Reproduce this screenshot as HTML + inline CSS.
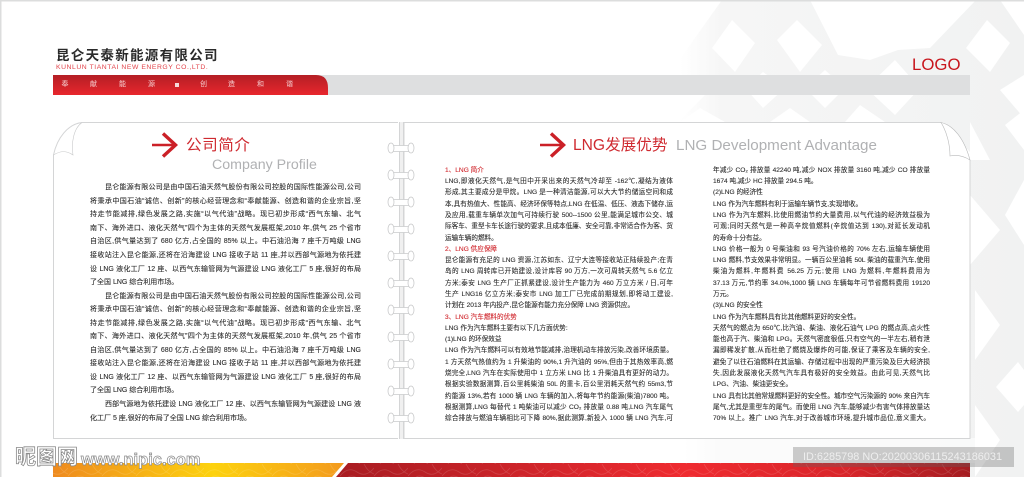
<!DOCTYPE html>
<html lang="zh"><head><meta charset="utf-8"><title>昆仑天泰新能源有限公司</title>
<style>
html,body{margin:0;padding:0;background:#fff}
body{width:1024px;height:477px;overflow:hidden;position:relative;font-family:"Liberation Sans","Noto Sans CJK SC",sans-serif}
svg.bg{position:absolute;left:0;top:0}
.l{position:absolute;font-size:7px;line-height:10px;height:10px;color:#303030;-webkit-text-stroke:.12px #303030;text-align:justify;text-align-last:justify;overflow:hidden}
.e{text-align-last:left}
.r{color:#d0282e;-webkit-text-stroke:.12px #d0282e}
.a .l{left:90px;width:271px}
.a .i{left:105px;width:256px}
.b .l{left:445px;width:228px;font-size:6.6px}
.c .l{left:713px;width:217px;font-size:6.6px}
.t{position:absolute;white-space:nowrap}
</style></head><body>
<svg class="bg" width="1024" height="477" viewBox="0 0 1024 477">
<defs>
<linearGradient id="fade" x1="0" x2="1"><stop offset="0" stop-color="#f6f6f6" stop-opacity="0"/><stop offset=".12" stop-color="#f6f6f6"/><stop offset="1" stop-color="#f1f2f2"/></linearGradient>
<linearGradient id="org" x1="0" x2="1"><stop offset="0" stop-color="#ee8a1f"/><stop offset=".55" stop-color="#fdd20e"/><stop offset="1" stop-color="#f39a1e"/></linearGradient>
<linearGradient id="rd" x1="0" x2="1"><stop offset="0" stop-color="#a81c22"/><stop offset=".55" stop-color="#ef2b30"/><stop offset=".8" stop-color="#d9252a"/><stop offset="1" stop-color="#a41d21"/></linearGradient>
<linearGradient id="bar" x1="0" y1="0" x2="0" y2="1"><stop offset="0" stop-color="#b41f25"/><stop offset="1" stop-color="#e8262d"/></linearGradient>
<pattern id="fl" width="34" height="16" patternUnits="userSpaceOnUse"><path d="M0 12Q8 2 17 8T34 4M6 16Q10 8 20 16M24 0Q28 8 34 10" fill="none" stroke="#fff" stroke-opacity=".14" stroke-width=".8"/></pattern>
</defs>
<!-- lattice -->
<rect x="680" y="0" width="344" height="477" fill="url(#fade)"/>
<g fill="#fff">
<polygon points="680,0 722,0 690,45 680,60"/>
<polygon points="732,20 755,43 735,72 712,48"/>
<polygon points="797,20 822,45 800,72 777,40"/>
<polygon points="810,0 976,0 930,48 898,50 870,60 838,55"/>
<polygon points="680,72 705,95 680,120"/>
<polygon points="763,72 785,88 763,108 745,88"/>
<polygon points="825,70 845,88 825,108 805,88"/>
<polygon points="895,60 920,88 895,115 866,88"/>
<polygon points="987,20 1010,43 990,72 966,48"/>
<polygon points="1024,0 1024,35 1000,0"/>
<polygon points="1024,75 1000,90 1024,118"/>
<polygon points="700,108 725,122 680,122"/>
<polygon points="790,108 810,122 770,122"/>
<polygon points="860,105 885,122 845,122"/>
<polygon points="970,122 990,160 970,160"/>
<polygon points="1005,125 1024,110 1024,150"/>
<polygon points="970,195 1000,230 970,265"/>
<polygon points="1024,180 1005,215 1024,245"/>
<polygon points="975,290 1000,325 975,360"/>
<polygon points="1018,362 996,387 1018,412 1024,405 1024,370"/>
<polygon points="975,405 1000,440 975,477"/>
<rect x="680" y="438" width="300" height="25" fill="#fff" opacity=".55"/>
</g>
<rect x="0" y="0" width="1024" height="1.5" fill="#dcdddd"/>
<rect x="0" y="0" width="1.5" height="477" fill="#dcdddd"/>
<!-- header bar -->
<rect x="53" y="75" width="917" height="20" fill="#dcddde" fill-opacity=".95"/>
<path d="M53 75H316Q328 75 328 88V95H53Z" fill="url(#bar)"/>
<!-- cards -->
<path d="M82 122H398V438H53V152" fill="#fff"/>
<path d="M404 122H941L970 152V438H404Z" fill="#fff"/>
<path d="M82 122.5C68 124 57 138 53.5 155V438.5H398M82 122.5H398" fill="none" stroke="#d4d5d6" stroke-width="1"/>
<path d="M404 122.5H941M970 160V438.5H404V122.5" fill="none" stroke="#d4d5d6" stroke-width="1"/>
<path d="M82 122.5C74 128 71 142 73 155C66 150 60 151 53.5 155" fill="#fff" stroke="#c8c9ca" stroke-width=".6"/>
<path d="M941 122.5C953 125 964 138 970 160C962 155 955 155 950 156C950 145 947 132 941 122.5Z" fill="#fff" stroke="#b8b9ba" stroke-width=".6"/>
<!-- spine -->
<rect x="399" y="122" width="5" height="317" fill="#f0f0f0"/>
<path d="M399.5 122V439M403.5 122V439" stroke="#d4d5d6" stroke-width="1"/>
<g fill="#fff" stroke="#c9cacb" stroke-width=".8">
<g id="r0"><path d="M391 145.5H411V151.5H391Z"/><ellipse cx="391" cy="148" rx="3" ry="5"/><ellipse cx="411" cy="148" rx="3" ry="5"/></g>
<use href="#r0" y="27"/><use href="#r0" y="54"/><use href="#r0" y="81"/><use href="#r0" y="108"/><use href="#r0" y="135"/><use href="#r0" y="162"/><use href="#r0" y="189"/><use href="#r0" y="216"/><use href="#r0" y="243"/><use href="#r0" y="270"/>
</g>
<!-- arrows -->
<g fill="none" stroke="#cb2027">
<path d="M152 145H175" stroke-width="2.6"/><path d="M163 133.5L175.5 145L163 156.5" stroke-width="3.4"/>
<path d="M540 145H563" stroke-width="2.6"/><path d="M551 133.5L563.5 145L551 156.5" stroke-width="3.4"/>
</g>
<!-- bottom band -->
<path d="M53 463H344L332 477H53Z" fill="url(#org)"/>
<path d="M348 463H970V477H336Z" fill="url(#rd)"/>
<rect x="53" y="463" width="917" height="14" fill="url(#fl)"/>
<!-- id strip -->
<rect x="793" y="447" width="221" height="20" fill="#646464" fill-opacity=".32"/>
</svg>

<div class="t" style="left:56px;top:47px;font-size:13.5px;line-height:17px;font-weight:700;color:#2a2a2a;letter-spacing:1.3px">昆仑天泰新能源有限公司</div>
<div class="t" style="left:56px;top:64px;font-size:6.8px;line-height:8px;color:#e2434a;letter-spacing:.55px">KUNLUN TIANTAI NEW ENERGY CO.,LTD.</div>
<div class="t" style="left:912px;top:54px;font-size:16.8px;line-height:21px;color:#c8161d">LOGO</div>
<div style="color:#f6d0d2;font-size:7px;line-height:8px">
<div class="t" style="left:61.5px;top:81px">奉</div><div class="t" style="left:90px;top:81px">献</div><div class="t" style="left:119px;top:81px">能</div><div class="t" style="left:148px;top:81px">源</div><div class="t" style="left:175px;top:83px;width:4px;height:4px;background:#f6dada"></div><div class="t" style="left:200px;top:81px">创</div><div class="t" style="left:228px;top:81px">造</div><div class="t" style="left:257px;top:81px">和</div><div class="t" style="left:286px;top:81px">谐</div>
</div>

<div class="t" style="left:186px;top:136px;font-size:15.6px;line-height:20px;color:#cf2a30;letter-spacing:.5px">公司简介</div>
<div class="t" style="left:212px;top:156px;font-size:14.2px;line-height:18px;color:#b0b1b3">Company Profile</div>
<div class="t" style="left:573px;top:136px;font-size:15.6px;line-height:20px;color:#cf2a30">LNG发展优势</div>
<div class="t" style="left:676px;top:136px;font-size:15.2px;line-height:20px;color:#b0b1b3">LNG Development Advantage</div>

<div class="a">
<div class="l i" style="top:183px">昆仑能源有限公司是由中国石油天然气股份有限公司控股的国际性能源公司,公司</div>
<div class="l" style="top:197px">将秉承中国石油“诚信、创新”的核心经营理念和“奉献能源、创造和谐的企业宗旨,坚</div>
<div class="l" style="top:210px">持走节能减排,绿色发展之路,实施“以气代油”战略。现已初步形成“西气东输、北气</div>
<div class="l" style="top:224px">南下、海外进口、液化天然气”四个为主体的天然气发展框架,2010 年,供气 25 个省市</div>
<div class="l" style="top:237px">自治区,供气量达到了 680 亿方,占全国的 85% 以上。中石油沿海 7 座千万吨级 LNG</div>
<div class="l" style="top:251px">接收站注入昆仑能源,还将在沿海建设 LNG 接收子站 11 座,并以西部气源地为依托建</div>
<div class="l" style="top:265px">设 LNG 液化工厂 12 座、以西气东输管网为气源建设 LNG 液化工厂 5 座,很好的布局</div>
<div class="l e" style="top:278px">了全国 LNG 综合利用市场。</div>
<div class="l i" style="top:292px">昆仑能源有限公司是由中国石油天然气股份有限公司控股的国际性能源公司,公司</div>
<div class="l" style="top:305px">将秉承中国石油“诚信、创新”的核心经营理念和“奉献能源、创造和谐的企业宗旨,坚</div>
<div class="l" style="top:319px">持走节能减排,绿色发展之路,实施“以气代油”战略。现已初步形成“西气东输、北气</div>
<div class="l" style="top:332px">南下、海外进口、液化天然气”四个为主体的天然气发展框架,2010 年,供气 25 个省市</div>
<div class="l" style="top:346px">自治区,供气量达到了 680 亿方,占全国的 85% 以上。中石油沿海 7 座千万吨级 LNG</div>
<div class="l" style="top:359px">接收站注入昆仑能源,还将在沿海建设 LNG 接收子站 11 座,并以西部气源地为依托建</div>
<div class="l" style="top:373px">设 LNG 液化工厂 12 座、以西气东输管网为气源建设 LNG 液化工厂 5 座,很好的布局</div>
<div class="l e" style="top:386px">了全国 LNG 综合利用市场。</div>
<div class="l i" style="top:400px">西部气源地为依托建设 LNG 液化工厂 12 座、以西气东输管网为气源建设 LNG 液</div>
<div class="l e" style="top:414px">化工厂 5 座,很好的布局了全国 LNG 综合利用市场。</div>
</div>

<div class="b">
<div class="l e r" style="top:166px">1、LNG 简介</div>
<div class="l" style="top:177px">LNG,即液化天然气,是气田中开采出来的天然气冷却至 -162℃,凝结为液体</div>
<div class="l" style="top:188px">形成,其主要成分是甲烷。LNG 是一种清洁能源,可以大大节约储运空间和成</div>
<div class="l" style="top:200px">本,具有热值大、性能高、经济环保等特点,LNG 在低温、低压、液态下储存,运输</div>
<div class="l" style="top:211px">及应用,载重车辆单次加气可持续行驶 500--1500 公里,能满足城市公交、城</div>
<div class="l" style="top:222px">际客车、重型卡车长途行驶的要求,且成本低廉、安全可靠,非常适合作为客、货</div>
<div class="l e" style="top:234px">运输车辆的燃料。</div>
<div class="l e r" style="top:245px">2、LNG 供应保障</div>
<div class="l" style="top:256px">昆仑能源有充足的 LNG 资源,江苏如东、辽宁大连等接收站正陆续投产;在青</div>
<div class="l" style="top:267px">岛的 LNG 周转库已开始建设,设计库容 90 万方,一次可周转天然气 5.6 亿立</div>
<div class="l" style="top:279px">方米;泰安 LNG 生产厂正抓紧建设,设计生产能力为 460 万立方米 / 日,可年</div>
<div class="l" style="top:290px">生产 LNG16 亿立方米;泰安市 LNG 加工厂已完成前期规划,即将动工建设,</div>
<div class="l e" style="top:301px">计划在 2013 年内投产,昆仑能源有能力充分保障 LNG 资源供应。</div>
<div class="l e r" style="top:313px">3、LNG 汽车燃料的优势</div>
<div class="l e" style="top:324px">LNG 作为汽车燃料主要有以下几方面优势:</div>
<div class="l e" style="top:335px">(1)LNG 的环保效益</div>
<div class="l" style="top:346px">LNG 作为汽车燃料可以有效地节能减排,治理机动车排放污染,改善环境质量。</div>
<div class="l" style="top:358px">1 方天然气热值约为 1 升柴油的 90%,1 升汽油的 95%,但由于其热效率高,燃</div>
<div class="l" style="top:369px">烧完全,LNG 汽车在实际使用中 1 立方米 LNG 比 1 升柴油具有更好的动力。</div>
<div class="l" style="top:380px">根据实验数据测算,百公里耗柴油 50L 的重卡,百公里消耗天然气约 55m3,节</div>
<div class="l" style="top:392px">约能源 13%,若有 1000 辆 LNG 车辆的加入,将每年节约能源(柴油)7800 吨。</div>
<div class="l" style="top:403px">根据测算,LNG 每替代 1 吨柴油可以减少 CO₂ 排放量 0.88 吨,LNG 汽车尾气</div>
<div class="l" style="top:414px">综合排放与燃油车辆相比可下降 80%,据此测算,新投入 1000 辆 LNG 汽车,可</div>
</div>

<div class="c">
<div class="l" style="top:166px">年减少 CO₂ 排放量 42240 吨,减少 NOX 排放量 3160 吨,减少 CO 排放量</div>
<div class="l e" style="top:177px">1674 吨,减少 HC 排放量 294.5 吨。</div>
<div class="l e" style="top:188px">(2)LNG 的经济性</div>
<div class="l e" style="top:200px">LNG 作为汽车燃料有利于运输车辆节支,实现增收。</div>
<div class="l" style="top:211px">LNG 作为汽车燃料,比使用燃油节约大量费用,以气代油的经济效益极为</div>
<div class="l" style="top:222px">可观;同时天然气是一种高辛烷值燃料(辛烷值达到 130),对延长发动机</div>
<div class="l e" style="top:234px">的寿命十分有益。</div>
<div class="l" style="top:245px">LNG 价格一般为 0 号柴油和 93 号汽油价格的 70% 左右,运输车辆使用</div>
<div class="l" style="top:256px">LNG 燃料,节支效果非常明显。一辆百公里油耗 50L 柴油的载重汽车,使用</div>
<div class="l" style="top:267px">柴油为燃料,年燃料费 56.25 万元;使用 LNG 为燃料,年燃料费用为</div>
<div class="l" style="top:279px">37.13 万元,节约率 34.0%,1000 辆 LNG 车辆每年可节省燃料费用 19120</div>
<div class="l e" style="top:290px">万元。</div>
<div class="l e" style="top:301px">(3)LNG 的安全性</div>
<div class="l e" style="top:313px">LNG 作为汽车燃料具有比其他燃料更好的安全性。</div>
<div class="l" style="top:324px">天然气的燃点为 650℃,比汽油、柴油、液化石油气 LPG 的燃点高,点火性</div>
<div class="l" style="top:335px">能也高于汽、柴油和 LPG。天然气密度很低,只有空气的一半左右,稍有泄</div>
<div class="l" style="top:346px">漏即稀发扩散,从而杜绝了燃烧及爆炸的可能,保证了乘客及车辆的安全,</div>
<div class="l" style="top:358px">避免了以往石油燃料在其运输、存储过程中出现的严重污染及巨大经济损</div>
<div class="l" style="top:369px">失,因此发展液化天然气汽车具有极好的安全效益。由此可见,天然气比</div>
<div class="l e" style="top:380px">LPG、汽油、柴油更安全。</div>
<div class="l" style="top:392px">LNG 具有比其他常规燃料更好的安全性。城市空气污染源的 90% 来自汽车</div>
<div class="l" style="top:403px">尾气,尤其是重型车的尾气。而使用 LNG 汽车,能够减少有害气体排放量达</div>
<div class="l" style="top:414px">70% 以上。推广 LNG 汽车,对于改善城市环境,提升城市品位,意义重大。</div>
</div>

<div class="t" style="left:15px;top:444px;font-size:21px;line-height:28px;font-weight:700;color:#fff;-webkit-text-stroke:.8px #8a8a8a">昵图网</div>
<div class="t" style="left:81px;top:449px;font-size:16.5px;line-height:22px;font-weight:700;color:#fff;-webkit-text-stroke:.7px #8a8a8a">www.nipic.com</div>
<div class="t" style="left:803px;top:450px;font-size:10.9px;line-height:14px;color:#eeeeee">ID:6285798 NO:20200306115243186031</div>
</body></html>
